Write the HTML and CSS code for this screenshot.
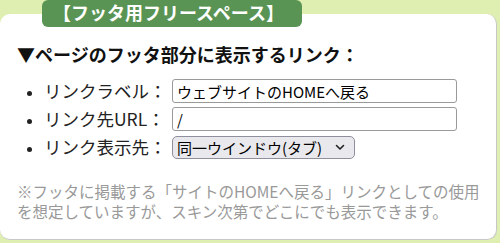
FILE: index.html
```html
<!DOCTYPE html>
<html lang="ja">
<head>
<meta charset="utf-8">
<link rel="stylesheet" href="styles.css">
</head>
<body>
<div class="card">
  <div class="tab">【フッタ用フリースペース】</div>
  <h3 class="heading">▼ページのフッタ部分に表示するリンク：</h3>
  <ul class="fields">
    <li class="field"><span class="label">リンクラベル：</span><input class="text" type="text" value="ウェブサイトのHOMEへ戻る"></li>
    <li class="field"><span class="label">リンク先URL：</span><input class="text" type="text" value="/"></li>
    <li class="field"><span class="label">リンク表示先：</span><span class="selwrap"><select class="sel"><option>同一ウインドウ(タブ)</option></select><svg class="chev" width="10" height="7" viewBox="0 0 10 7"><path d="M1.5 1.5 L5 5 L8.5 1.5" fill="none" stroke="#222" stroke-width="1.6" stroke-linecap="round" stroke-linejoin="round"/></svg></span></li>
  </ul>
  <p class="note">※フッタに掲載する「サイトのHOMEへ戻る」リンクとしての使用を想定していますが、スキン次第でどこにでも表示できます。</p>
</div>
</body>
</html>
```

FILE: styles.css
```css
html, body {
  margin: 0;
  padding: 0;
}
body {
  background: #dfeeb1;
  font-family: "Noto Sans CJK JP", "Noto Sans", sans-serif;
  width: 500px;
  height: 243px;
  overflow: hidden;
}
.card {
  position: relative;
  box-sizing: border-box;
  margin: 14px 3px 0 0;
  height: 226px;
  background: #fff;
  border-radius: 10px;
  border-right: 1px solid #c8c8c8;
  border-bottom: 1px solid #c8c8c8;
  padding: 27px 12px 0 17px;
}
.tab {
  position: absolute;
  top: -14px;
  left: 42px;
  width: 260px;
  height: 27px;
  box-sizing: border-box;
  background: #5a9455;
  border-radius: 6px;
  color: #fff;
  font-weight: bold;
  font-size: 18px;
  line-height: 24px;
  padding-left: 11px;
  white-space: nowrap;
}
.heading {
  margin: 0;
  font-size: 18px;
  line-height: 26px;
  font-weight: bold;
  color: #111;
}
.fields {
  margin: 12px 0 0 0;
  padding: 0 0 0 27px;
  list-style: disc;
  color: #222;
}
.field {
  font-size: 17.5px;
  line-height: 24px;
  height: 24px;
  margin-bottom: 4px;
}
.field::marker {
  font-size: 14px;
}
.label {
  display: inline-block;
  width: 128px;
  white-space: nowrap;
}
.text {
  box-sizing: border-box;
  width: 285px;
  height: 24px;
  border: 1px solid #9a9a9a;
  border-radius: 3px;
  padding: 0 4px;
  font-family: "Noto Sans CJK JP", sans-serif;
  font-size: 15px;
  color: #000;
  vertical-align: top;
}
.selwrap {
  position: relative;
  display: inline-block;
  vertical-align: top;
}
.sel {
  -webkit-appearance: none;
  appearance: none;
  box-sizing: border-box;
  width: 183px;
  height: 23px;
  margin-top: 1px;
  border: 1px solid #8f8f9d;
  border-radius: 5px;
  background: #e9e9ed;
  padding: 0 0 0 4px;
  font-family: "Noto Sans CJK JP", sans-serif;
  font-size: 15px;
  color: #000;
  display: block;
}
.chev {
  position: absolute;
  right: 10px;
  top: 9px;
}
.note {
  margin: 22px 0 0 0;
  font-size: 15.5px;
  line-height: 20px;
  color: #999;
}
```
